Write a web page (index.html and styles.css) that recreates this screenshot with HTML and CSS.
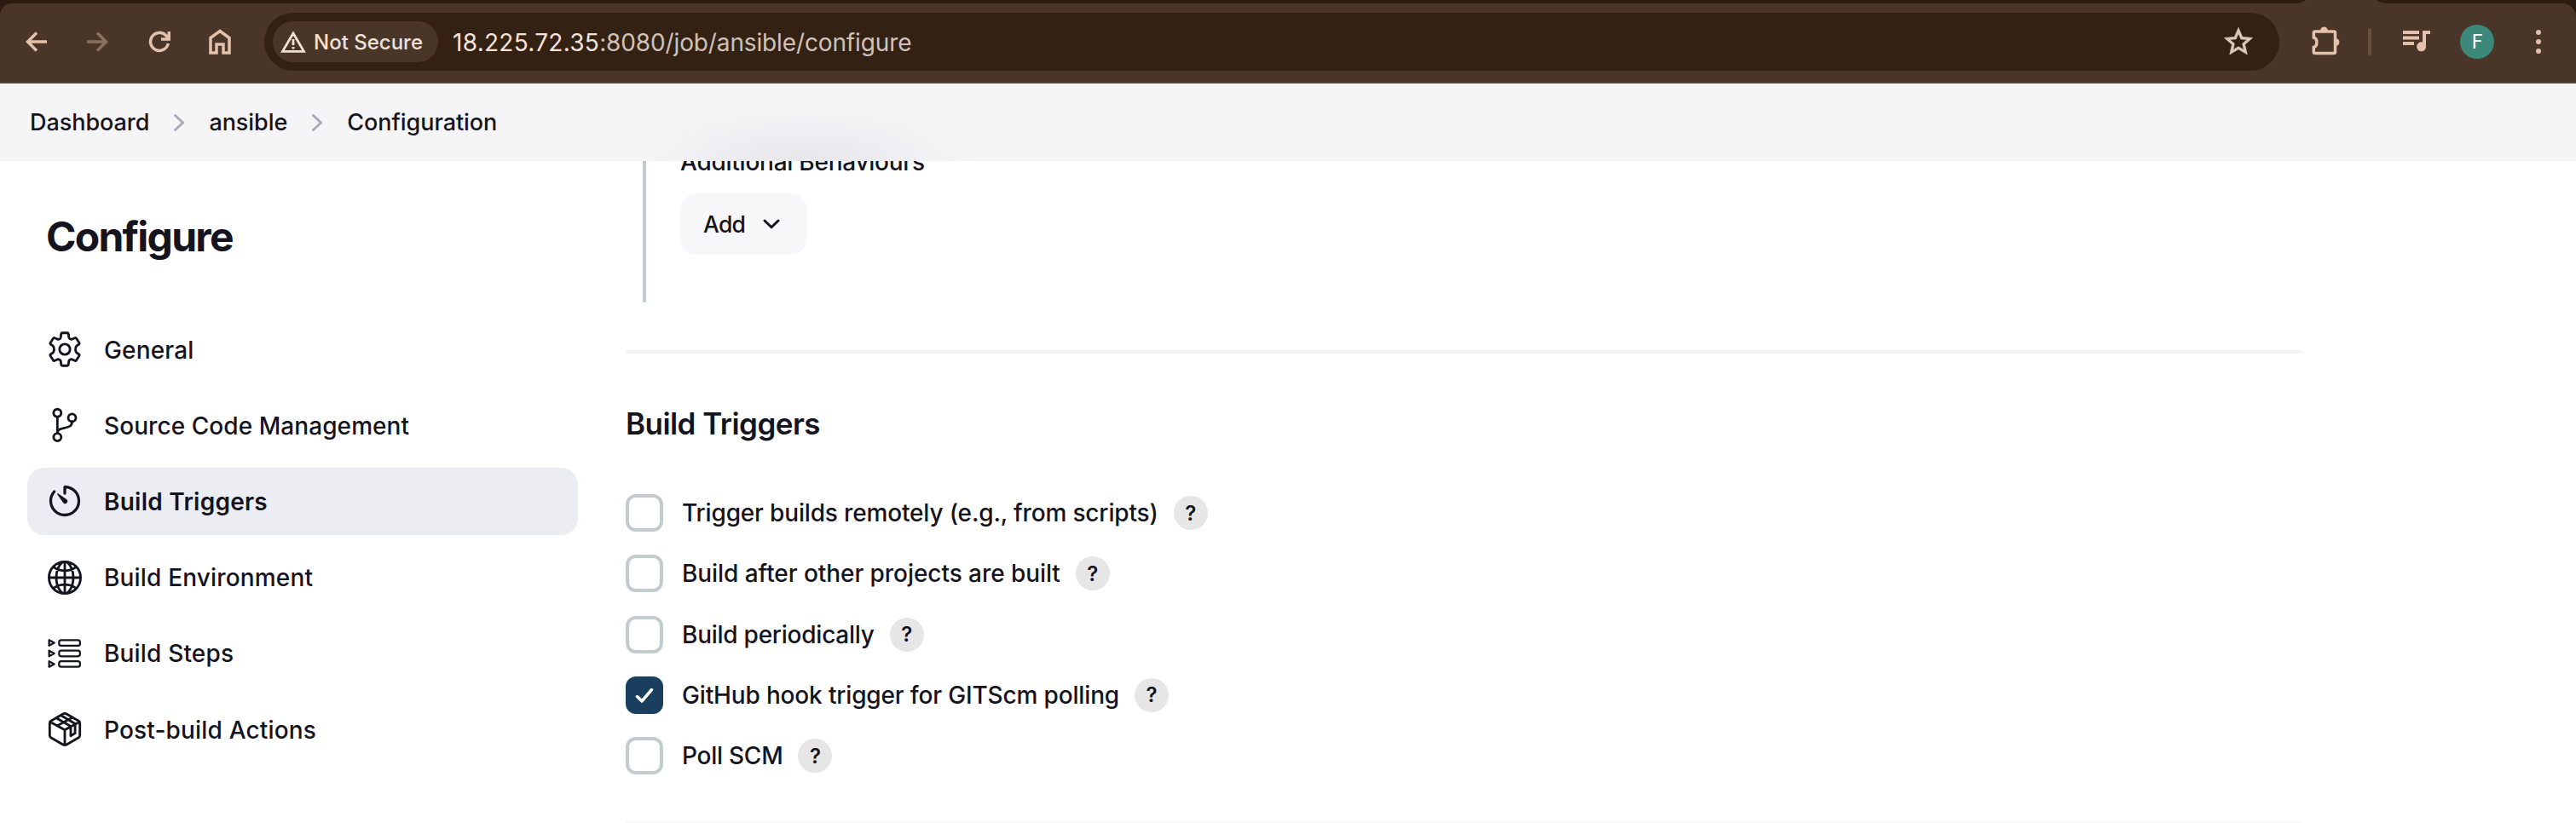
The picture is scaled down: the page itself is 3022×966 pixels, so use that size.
FILE: index.html
```html
<!DOCTYPE html>
<html lang="en">
<head>
<meta charset="utf-8">
<title>ansible Config [Jenkins]</title>
<link rel="stylesheet" href="styles.css">
</head>
<body>
<header class="browser">
  <div class="tabstrip"><svg class="tab-foot" viewBox="0 0 116 4"><path d="M0 4C8 4 13 2.500 16 0H99C102 2.500 107 4 115 4Z"/></svg></div>
  <div class="toolbar">
    <svg class="tool back" viewBox="0 0 26 24"><path d="M25 12H3M13 1.500 2.500 12 13 22.500"/></svg>
    <svg class="tool forward" viewBox="0 0 26 24"><path d="M1 12H23M13 1.500 23.500 12 13 22.500"/></svg>
    <svg class="tool reload" viewBox="0 0 26 26"><path d="M23.300 15A10.500 10.500 0 1 1 20.500 5.500L23 8.500M24.300 1V10H15"/></svg>
    <svg class="tool home" viewBox="0 0 26 30"><path d="M2 10.500 13 2.500 24 10.500V28H17V18H9V28H2Z"/></svg>
    <div class="omnibox">
      <div class="chip">
        <svg class="warn" viewBox="0 0 30 26"><path d="M15 3 27.500 24.300H2.500Z"/><path d="M15 10V17M15 19V21.500"/></svg>
        <span class="t">Not Secure</span>
      </div>
      <div class="url"><span class="t host">18.225.72.35</span><span class="t path">:8080/job/ansible/configure</span></div>
      <svg class="star" viewBox="0 0 24 24"><path d="M22 9.240l-7.190-.620L12 2 9.190 8.630 2 9.240l5.460 4.730L5.820 21 12 17.270 18.180 21l-1.630-7.030L22 9.240zM12 15.400l-3.760 2.270 1-4.280-3.320-2.880 4.380-.380L12 6.100l1.710 4.040 4.380.380-3.320 2.880 1 4.280L12 15.400z"/></svg>
    </div>
    <svg class="puzzle" viewBox="0 0 34 34"><path d="M5 6H27Q28.500 6 28.500 7.500V30Q28.500 31.500 27 31.500H5Q3.300 31.500 3.300 30V24.500C8 23.500 8 14 3.300 13V7.500Q3.300 6 5 6Z"/><path class="solid" d="M11 5A4.500 4.500 0 0 1 20 5ZM29 14A4.500 4.500 0 0 1 29 23Z"/></svg>
    <i class="divider"></i>
    <svg class="music" viewBox="0 0 32 26"><path d="M0 0H19V4H0ZM0 6.500H19V10.500H0ZM0 13H13V17H0ZM23 0H32V4H27V18A5.500 5.500 0 1 1 23 13.500Z"/></svg>
    <span class="avatar">F</span>
    <svg class="dots" viewBox="0 0 6 28"><circle cx="3" cy="3" r="3"/><circle cx="3" cy="14" r="3"/><circle cx="3" cy="25" r="3"/></svg>
  </div>
</header>
<nav class="crumbs">
  <span class="t">Dashboard</span>
  <svg class="sep" viewBox="0 0 12 20"><path d="M1.500 1.500 10.500 10 1.500 18.500"/></svg>
  <span class="t">ansible</span>
  <svg class="sep" viewBox="0 0 12 20"><path d="M1.500 1.500 10.500 10 1.500 18.500"/></svg>
  <span class="t">Configuration</span>
</nav>
<div class="page">
  <aside class="side">
    <h1>Configure</h1>
    <a class="item"><svg viewBox="0 0 512 512"><circle cx="256" cy="256" r="72"/><path d="M206 52Q207 32 222 32H290Q305 32 306 52L312 96Q320 116 342 119L358 117L392 101Q406 94 414 108L452 166Q460 180 447 189L416 212Q402 228 402 256Q402 284 416 300L447 323Q460 332 452 346L414 404Q406 418 392 411L358 395Q340 388 322 400Q314 406 312 416L306 460Q305 480 290 480H222Q207 480 206 460L200 416Q194 396 170 393L154 395L120 411Q106 418 98 404L60 346Q52 332 65 323L96 300Q110 284 110 256Q110 228 96 212L65 189Q52 180 60 166L98 108Q106 94 120 101L154 117Q172 124 190 112Q198 106 200 96Z"/></svg><span class="t">General</span></a>
    <a class="item"><svg viewBox="0 0 512 512"><circle cx="155" cy="90" r="52"/><circle cx="155" cy="420" r="52"/><circle cx="355" cy="156" r="52"/><path d="M155 368V144M355 208c0 128-200 48-200 160"/></svg><span class="t scm">Source Code Management</span></a>
    <a class="item active"><svg viewBox="0 0 512 512"><path d="M112.910 128A191.850 191.850 0 0 0 64 254c-1.180 106.350 85.650 193.800 192 194 106.200.200 192-85.830 192-192 0-104.540-83.550-189.610-187.500-192a4.360 4.360 0 0 0-4.500 4.370V152" stroke-width="38"/><path class="fill" d="M233.380 278.630l-79-113a8.130 8.130 0 0 1 11.320-11.320l113 79a32.500 32.500 0 0 1-37.250 53.260 33.210 33.210 0 0 1-8.070-7.940z"/></svg><span class="t">Build Triggers</span></a>
    <a class="item"><svg viewBox="0 0 512 512"><path d="M256 40C136 40 40 136 40 256s96 216 216 216 216-96 216-216S376 40 256 40zM256 40c-58 0-116 96-116 216S198 472 256 472s116-96 116-216S314 40 256 40zM112 117.330c38.240 27.150 91 43.340 144 43.340s106-16.190 144-43.340M400 394.670c-38.240-27.150-91-43.340-144-43.340s-106 16.190-144 43.340M256 40V472M472 256H40"/></svg><span class="t">Build Environment</span></a>
    <a class="item"><svg viewBox="0 0 512 512" class="thin"><rect x="178" y="73" width="286" height="76" rx="28"/><rect x="178" y="218" width="286" height="76" rx="28"/><rect x="178" y="363" width="286" height="76" rx="28"/><path d="M42 72V150L112 111ZM42 217V295L112 256ZM42 362V440L112 401Z"/></svg><span class="t">Build Steps</span></a>
    <a class="item"><svg viewBox="0 0 512 512"><path d="M462 341.370V170.610A32 32 0 0 0 446 143L280 47.540a47.940 47.940 0 0 0-48.240 0L66 143A32 32 0 0 0 50 170.610v170.760A32 32 0 0 0 66 369L232 464.460a48 48 0 0 0 48.240 0L446 369A32 32 0 0 0 462 341.370zM55 153.990l201 112 201-112M256 470V266M146 104L337 215V347L397 310V180L206 68M152 208L354 98"/></svg><span class="t">Post-build Actions</span></a>
  </aside>
  <main class="main">
    <section class="nested">
      <div class="label"><span class="t">Additional Behaviours</span></div>
      <button class="add"><span class="t">Add</span><svg viewBox="0 0 20 12"><path d="M2 2 10 9.800 18 2"/></svg></button>
    </section>
    <hr>
    <h2>Build Triggers</h2>
    <div class="row"><i class="box"></i><span class="t">Trigger builds remotely (e.g., from scripts)</span><b class="help">?</b></div>
    <div class="row loose"><i class="box"></i><span class="t">Build after other projects are built</span><b class="help">?</b></div>
    <div class="row tight"><i class="box"></i><span class="t">Build periodically</span><b class="help">?</b></div>
    <div class="row"><i class="box on"><svg viewBox="0 0 44 44"><path d="M13.500 23.500 19 29 30.500 15.500"/></svg></i><span class="t">GitHub hook trigger for GITScm polling</span><b class="help">?</b></div>
    <div class="row tight"><i class="box"></i><span class="t">Poll SCM</span><b class="help">?</b></div>
    <hr class="last">
  </main>
</div>
</body>
</html>
```
FILE: styles.css
```css
* { box-sizing: border-box; }
body { margin: 0; width: 3022px; height: 966px; overflow: hidden; background: #fff; color: #14141f; font-family: Inter, "Liberation Sans", sans-serif; font-size: 28px; font-weight: 500; }
svg { display: block; flex: none; fill: none; stroke: currentColor; }
.t { white-space: nowrap; }

.browser { height: 98px; background: #2b1b11; }
.tabstrip { height: 4px; padding-left: 2689px; }
.tab-foot { width: 116px; height: 4px; fill: #4a3628; stroke: none; }
.toolbar { display: flex; align-items: center; height: 94px; padding: 0 41px 2px 30px; background: #4a3628; border-bottom: 2px solid #50443c; border-radius: 14px 16px 0 0; color: #e3c1ab; }
.tool { stroke-width: 3.5; height: 24px; width: 26px; margin-right: 45px; }
.forward { color: #8b7060; margin-right: 47px; }
.reload { height: 26px; }
.home { height: 30px; margin-right: 39px; }
.omnibox { display: flex; align-items: center; width: 2364px; height: 68px; padding: 0 28px 0 10px; border-radius: 34px; background: #332114; }
.chip { display: flex; align-items: center; gap: 9px; width: 194px; height: 48px; padding-left: 9px; border-radius: 24px; background: #4a3628; color: #f2e0d6; font-size: 24px; }
.warn { width: 30px; height: 26px; stroke-width: 2.8; }
.url { flex: 1; padding: 2px 0 0 17px; font-weight: 400; }
.host { color: #f5e2d8; letter-spacing: .28px; }
.path { color: #d0c2b9; letter-spacing: -.13px; }
.star { width: 40px; height: 40px; fill: #d9c8be; stroke: #d9c8be; stroke-width: .4; }
.puzzle { width: 34px; height: 34px; margin: -2px 33px 0 37px; stroke-width: 3.5; }
.solid { fill: currentColor; stroke: none; }
.divider { width: 4px; height: 32px; border-radius: 2px; background: #694f40; }
.music { width: 32px; height: 26px; margin: 0 34px 0 37px; fill: currentColor; stroke: none; }
.avatar { display: grid; place-items: center; width: 40px; height: 40px; margin-left: 1px; border-radius: 50%; background: #3c887b; color: #fff; font: 400 23px Roboto, sans-serif; }
.dots { width: 6px; height: 28px; margin-left: auto; fill: currentColor; stroke: none; }

.crumbs { display: flex; align-items: center; height: 91px; padding-left: 35px; font-size: 27px; letter-spacing: -.05px; background: radial-gradient(ellipse 210px 66px at 945px 100%, rgba(20, 20, 31, .058) 0, rgba(20, 20, 31, .042) 35%, rgba(20, 20, 31, .01) 75%, rgba(20, 20, 31, 0) 100%), #f5f5f8; }
.sep { width: 12px; height: 20px; margin: 0 29px; color: #a8a8b8; stroke-width: 2.8; stroke-linecap: round; }

.page { display: flex; height: 777px; overflow: hidden; }
.side { width: 734px; padding-left: 32px; }
h1 { margin: 60px 0 63.6px 22px; height: 58px; font-size: 48px; line-height: 58px; font-weight: 700; letter-spacing: -1.75px; }
.item { display: flex; align-items: center; width: 646px; height: 79px; margin-bottom: 10.2px; padding-left: 22px; border-radius: 20px; letter-spacing: .17px; }
.item .t { padding-top: 1px; }
.item .scm { letter-spacing: .07px; }
.item svg { width: 44px; height: 44px; margin-right: 24px; stroke-width: 33; stroke-linejoin: round; stroke-linecap: round; }
.item .thin { stroke-width: 26; }
.item .fill { fill: currentColor; stroke: none; }
.active { background: #ecedf3; font-weight: 600; letter-spacing: .25px; }

.main { width: 1966px; }
.nested { display: flow-root; height: 166px; margin-left: 20px; padding-left: 40px; border-left: 4px solid #c2cbcf; border-radius: 0 0 2px 2px; }
.label { height: 38px; margin-top: -16px; line-height: 34px; letter-spacing: -.25px; }
.add { display: flex; align-items: center; width: 149px; height: 72px; margin-top: 16px; padding: 0 32px 0 27px; border: 0; border-radius: 20px; background: #f7f7fa; color: inherit; font: inherit; font-size: 26.5px; letter-spacing: -.7px; }
.add svg { width: 20px; height: 12px; margin-left: auto; stroke-width: 3; stroke-linecap: round; stroke-linejoin: round; }
hr { height: 4px; margin: 56px 0 0; border: 0; background: #f3f3f8; }
h2 { height: 44px; margin: 60px 0 61px; font-size: 35px; line-height: 44px; font-weight: 600; letter-spacing: -.55px; }
.row { display: flex; align-items: center; height: 44px; margin-bottom: 27.25px; letter-spacing: -.16px; }
.loose { letter-spacing: -.06px; }
.tight { letter-spacing: -.25px; }
.box { width: 44px; height: 44px; margin-right: 22px; border: 4px solid #c2cbcf; border-radius: 12px; }
.on { border: 0; background: #1a3e5e; color: #fff; stroke-width: 3.5; }
.on svg { stroke-linecap: round; stroke-linejoin: round; }
.help { display: grid; place-items: center; width: 40px; height: 40px; margin-left: 18px; border-radius: 50%; background: #e6e6e6; font-size: 24px; font-weight: 600; }
.last { margin-top: 56px; }
```
